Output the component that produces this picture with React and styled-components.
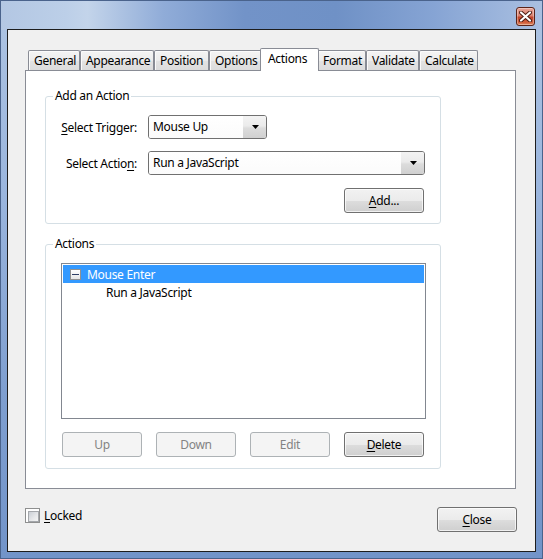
import React from 'react';
import styled, { createGlobalStyle, css } from 'styled-components';

const Global = createGlobalStyle`
  html, body { margin: 0; padding: 0; }
  body {
    width: 543px; height: 559px; overflow: hidden;
    font-family: "Noto Sans", "Open Sans", sans-serif;
    font-size: 12px; color: #000;
    letter-spacing: -0.3px;
  }
  * { box-sizing: border-box; }
`;

const Window = styled.div`
  width: 543px;
  height: 559px;
  display: flex;
  flex-direction: column;
  padding: 0 6px 6px 6px;
  border: 1px solid #4a638c;
  background:
    linear-gradient(90deg, #b3c7e3 0%, #bccfe8 12%, #c3d4ea 16%, #90acd8 30%, #7293c8 45%, #6f91c6 62%, #86a4d4 80%, #aac0e1 100%) top / 100% 29px no-repeat,
    linear-gradient(180deg, #aec4e2 0%, #9ab5dd 35%, #7f9fd0 70%, #7294c9 100%);
`;

const TitleBar = styled.div`
  height: 28px;
  flex: none;
  display: flex;
  justify-content: flex-end;
  align-items: flex-start;
  padding: 6px 1px 0 0;
`;

const CloseX = styled.div`
  width: 19px;
  height: 19px;
  border: 1px solid #5b2419;
  border-radius: 3px;
  background: linear-gradient(180deg, #e8a598 0%, #d9826f 45%, #c2442a 55%, #d0603d 85%, #e08c63 100%);
  box-shadow: inset 0 0 0 1px rgba(255,255,255,0.35);
  display: flex;
  align-items: center;
  justify-content: center;
`;

const Client = styled.div`
  flex: 1;
  border: 1px solid #1d1d1d;
  background: #f0f0f0;
  display: flex;
  flex-direction: column;
  padding: 18px 18px 0 17px;
`;

const TabStrip = styled.div`
  height: 22px;
  display: flex;
  align-items: flex-end;
  padding-left: 3px;
  position: relative;
  z-index: 1;
`;

const Tab = styled.div`
  width: ${p => p.$w}px;
  height: 20px;
  border: 1px solid #898c95;
  border-bottom: none;
  border-radius: 2px 2px 0 0;
  background: linear-gradient(180deg, #f4f4f4 0%, #ececec 50%, #e3e3e3 51%, #dcdcdc 100%);
  box-shadow: inset 1px 1px 0 #fbfbfb;
  padding-left: 5px;
  line-height: 19px;
  white-space: nowrap;
  ${p => p.$active && css`
    height: 23px;
    margin: 0 -2px -1px -2px;
    width: ${p.$w + 4}px;
    background: #fff;
    box-shadow: none;
    padding-left: 7px;
    line-height: 19px;
    position: relative;
    z-index: 2;
  `}
`;

const Panel = styled.div`
  height: 419px;
  margin-right: 1px;
  background: #fff;
  border: 1px solid #898c95;
  padding: 17px 0 0 19px;
  display: flex;
  flex-direction: column;
  gap: 12px;
`;

const Group = styled.fieldset`
  margin: 0;
  padding: 0 0 ${p => p.$pb}px 0;
  width: 396px;
  min-width: 0;
  border: 1px solid #d5dfe5;
  border-radius: 3px;
`;

const Legend = styled.legend`
  margin-left: 7px;
  padding: 0 2px;
  line-height: 16px;
  height: 16px;
`;

const FormGrid = styled.div`
  margin-top: 11px;
  display: grid;
  grid-template-columns: 91px 277px;
  column-gap: 11px;
  row-gap: 12px;
  align-items: center;
`;

const Label = styled.label`
  text-align: right;
  white-space: nowrap;
`;

const U = styled.span`
  text-decoration: underline;
  text-underline-offset: 2px;
`;

const Combo = styled.div`
  width: ${p => p.$w}px;
  height: 24px;
  border: 1px solid #707070;
  border-radius: 3px;
  background: #fff;
  display: flex;
  overflow: hidden;
`;

const ComboText = styled.div`
  flex: 1;
  padding-left: 4px;
  line-height: 21px;
  background: linear-gradient(180deg, #ffffff 0%, #fbfbfb 100%);
`;

const ComboArrow = styled.div`
  width: 23px;
  flex: none;
  background: linear-gradient(180deg, #f3f3f3 0%, #ebebeb 45%, #dcdcdc 55%, #d0d0d0 100%);
  display: flex;
  align-items: center;
  justify-content: center;
  padding-left: 1px;
`;

const Button = styled.button`
  width: 80px;
  height: 25px;
  margin: 0;
  padding: 0;
  font: inherit;
  letter-spacing: inherit;
  border-radius: 3px;
  border: 1px solid #707070;
  color: #000;
  background: linear-gradient(180deg, #f2f2f2 0%, #ebebeb 50%, #dddddd 51%, #cfcfcf 100%);
  box-shadow: inset 0 0 0 1px rgba(255,255,255,0.7);
  line-height: 21px;
  ${p => p.disabled && css`
    border-color: #adb2b5;
    background: #f4f4f4;
    color: #838383;
    box-shadow: none;
  `}
`;

const AddButton = styled(Button)`
  justify-self: end;
  margin: 1px 1px 0 0;
`;

const List = styled.div`
  margin: 11px 0 0 15px;
  width: 365px;
  height: 156px;
  border: 1px solid #828790;
  padding: 1px;
  background: #fff;
`;

const Row = styled.div`
  height: 18px;
  display: flex;
  align-items: center;
  gap: 6px;
  padding-left: ${p => p.$indent}px;
  white-space: nowrap;
  ${p => p.$selected && css`
    background: #3399ff;
    color: #fff;
  `}
`;

const Toggle = styled.div`
  width: 11px;
  height: 11px;
  border: 1px solid #919191;
  background: linear-gradient(180deg, #ffffff 0%, #e6e6e6 100%);
  display: flex;
  align-items: center;
  justify-content: center;
  &::after {
    content: "";
    width: 7px;
    height: 1px;
    background: #2f3f66;
  }
`;

const ButtonRow = styled.div`
  margin: 13px 0 0 16px;
  display: flex;
  gap: 14px;
`;

const BottomRow = styled.div`
  margin-top: 18px;
  display: flex;
  justify-content: space-between;
  align-items: flex-start;
`;

const CheckLabel = styled.label`
  display: flex;
  align-items: center;
  gap: 4px;
  height: 16px;
`;

const CheckBox = styled.span`
  width: 15px;
  height: 15px;
  border: 1px solid #8e8f8f;
  background: #fff;
  padding: 2px;
  display: block;
  &::after {
    content: "";
    display: block;
    width: 100%;
    height: 100%;
    background: linear-gradient(135deg, #cbcfd5 0%, #e7e8ea 60%, #f4f4f4 100%);
    border: 1px solid #a4a7ab;
  }
`;

const tabs = [
  ['General', 52], ['Appearance', 74], ['Position', 55], ['Options', 53],
  ['Actions', 55], ['Format', 49], ['Validate', 53], ['Calculate', 59],
];

export default function App() {
  return (
    <>
      <Global />
      <Window>
        <TitleBar>
          <CloseX>
            <svg width="13" height="11" viewBox="0 0 13 11">
              <path d="M2 1.5 L11 9.5 M11 1.5 L2 9.5" stroke="#4a1a10" strokeWidth="4" strokeLinecap="round" />
              <path d="M2 1.5 L11 9.5 M11 1.5 L2 9.5" stroke="#ffffff" strokeWidth="2.2" strokeLinecap="round" />
            </svg>
          </CloseX>
        </TitleBar>
        <Client>
          <TabStrip>
            {tabs.map(([t, w]) => (
              <Tab key={t} $w={w} $active={t === 'Actions'}>{t}</Tab>
            ))}
          </TabStrip>
          <Panel>
            <Group $pb={10}>
              <Legend>Add an Action</Legend>
              <FormGrid>
                <Label><U>S</U>elect Trigger:</Label>
                <Combo $w={119}>
                  <ComboText>Mouse Up</ComboText>
                  <ComboArrow>
                    <svg width="7" height="4" viewBox="0 0 7 4"><path d="M0 0 H7 L3.5 4 Z" fill="#000" /></svg>
                  </ComboArrow>
                </Combo>
                <Label>Select Actio<U>n</U>:</Label>
                <Combo $w={277}>
                  <ComboText>Run a JavaScript</ComboText>
                  <ComboArrow>
                    <svg width="7" height="4" viewBox="0 0 7 4"><path d="M0 0 H7 L3.5 4 Z" fill="#000" /></svg>
                  </ComboArrow>
                </Combo>
                <span />
                <AddButton><U>A</U>dd...</AddButton>
              </FormGrid>
            </Group>
            <Group $pb={11}>
              <Legend>Actions</Legend>
              <List>
                <Row $selected $indent={7}>
                  <Toggle />
                  <span>Mouse Enter</span>
                </Row>
                <Row $indent={43}>Run a JavaScript</Row>
              </List>
              <ButtonRow>
                <Button disabled>Up</Button>
                <Button disabled>Down</Button>
                <Button disabled>Edit</Button>
                <Button><U>D</U>elete</Button>
              </ButtonRow>
            </Group>
          </Panel>
          <BottomRow>
            <CheckLabel>
              <CheckBox />
              <span><U>L</U>ocked</span>
            </CheckLabel>
            <Button><U>C</U>lose</Button>
          </BottomRow>
        </Client>
      </Window>
    </>
  );
}
